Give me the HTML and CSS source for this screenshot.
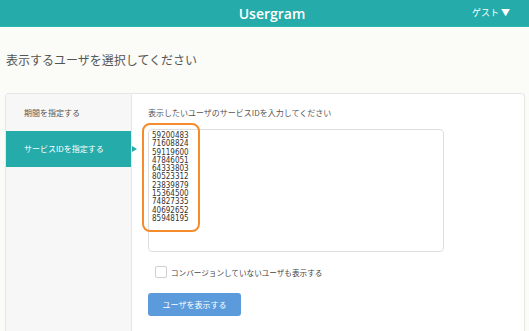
FILE: index.html
```html
<!DOCTYPE html>
<html>
<head>
<title>Usergram</title>
<link rel="stylesheet" href="styles.css">
</head>
<body>
<div class="topbar">
<span class="brand">Usergram</span>
<span class="guest">ゲスト&nbsp;▼</span>
</div>

<div class="page">
<h1 class="page-title">表示するユーザを選択してください</h1>

<div class="card">
<ul class="side-menu">
<li class="side-item">期間を指定する</li>
<li class="side-item active">サービスIDを指定する</li>
</ul>

<form class="panel">
<p class="panel-label">表示したいユーザのサービスIDを入力してください</p>
<textarea class="id-list" name="service_ids">59200483
71608824
59119600
47846051
64333803
80523312
23839879
15364500
74827335
40692652
85948195</textarea>
<div class="highlight"></div>

<label class="check-row">
<span class="check-box"></span>
コンバージョンしていないユーザも表示する
</label>

<button type="button" class="show-btn">ユーザを表示する</button>
</form>
</div>
</div>
</body>
</html>
```

FILE: styles.css
```css
body { margin: 0; background-color: #fbfbf8; font-family: "Noto Sans CJK JP", "Noto Sans", sans-serif; color: #555; overflow: hidden; }

.topbar { height: 26px; background-color: #25abaa; border-bottom: 1px solid #2cb6b4; display: flex; align-items: center; justify-content: center; position: relative; color: #fff; }
.brand { font-family: "Open Sans", "Noto Sans", sans-serif; font-weight: 600; font-size: 14px; margin-left: 15px; }
.guest { position: absolute; right: 19px; top: 6px; font-size: 9px; }

.page { padding: 0 4px 0 5px; }
.page-title { margin: 0; padding: 24px 0 0 1px; height: 42px; font-size: 12px; font-weight: normal; line-height: 18px; color: #555; }

.card { display: flex; height: 237px; border: 1px solid #e6e6e4; border-bottom: none; border-radius: 4px 4px 0 0; background-color: #fff; overflow: hidden; }

.side-menu { list-style: none; margin: 0; padding: 0; width: 125px; background-color: #f7f7f7; border-right: 1px solid #e6e6e6; }
.side-item { height: 37px; line-height: 37px; padding-left: 18px; font-size: 8px; color: #555; position: relative; }
.side-item.active { background-color: #25abaa; color: #fff; height: 36px; line-height: 36px; }
.side-item.active::after { content: ""; position: absolute; right: -6px; top: 15px; border-left: 5px solid #25abaa; border-top: 3px solid transparent; border-bottom: 3px solid transparent; }

.panel { flex: 1; padding: 13px 0 0 16px; position: relative; }
.panel-label { margin: 0; font-size: 8px; line-height: 12px; }

.id-list { display: block; box-sizing: border-box; width: 296px; height: 123px; margin-top: 10px; padding: 2px 3px; border: 1px solid #dedede; border-radius: 4px; resize: none; font-family: "Liberation Sans Narrow", "DejaVu Sans Condensed", sans-serif; font-stretch: condensed; font-size: 8px; line-height: 8.3px; color: #333; background: #fff; }

.highlight { position: absolute; left: 10px; top: 29px; width: 54px; height: 105px; border: 2px solid #f68b2c; border-radius: 8px; }

.check-row { display: flex; align-items: center; margin: 14px 0 0 7px; font-size: 7.6px; height: 12px; color: #444; }
.check-box { width: 10px; height: 10px; border: 1px solid #cfcfcf; border-radius: 2px; background: #fff; margin-right: 4px; }

.show-btn { display: block; margin-top: 15px; width: 93px; height: 23px; border: none; border-radius: 3px; background-color: #5b9bdc; color: #fff; font-family: "Noto Sans CJK JP", sans-serif; font-size: 8px; padding: 0; }
```
